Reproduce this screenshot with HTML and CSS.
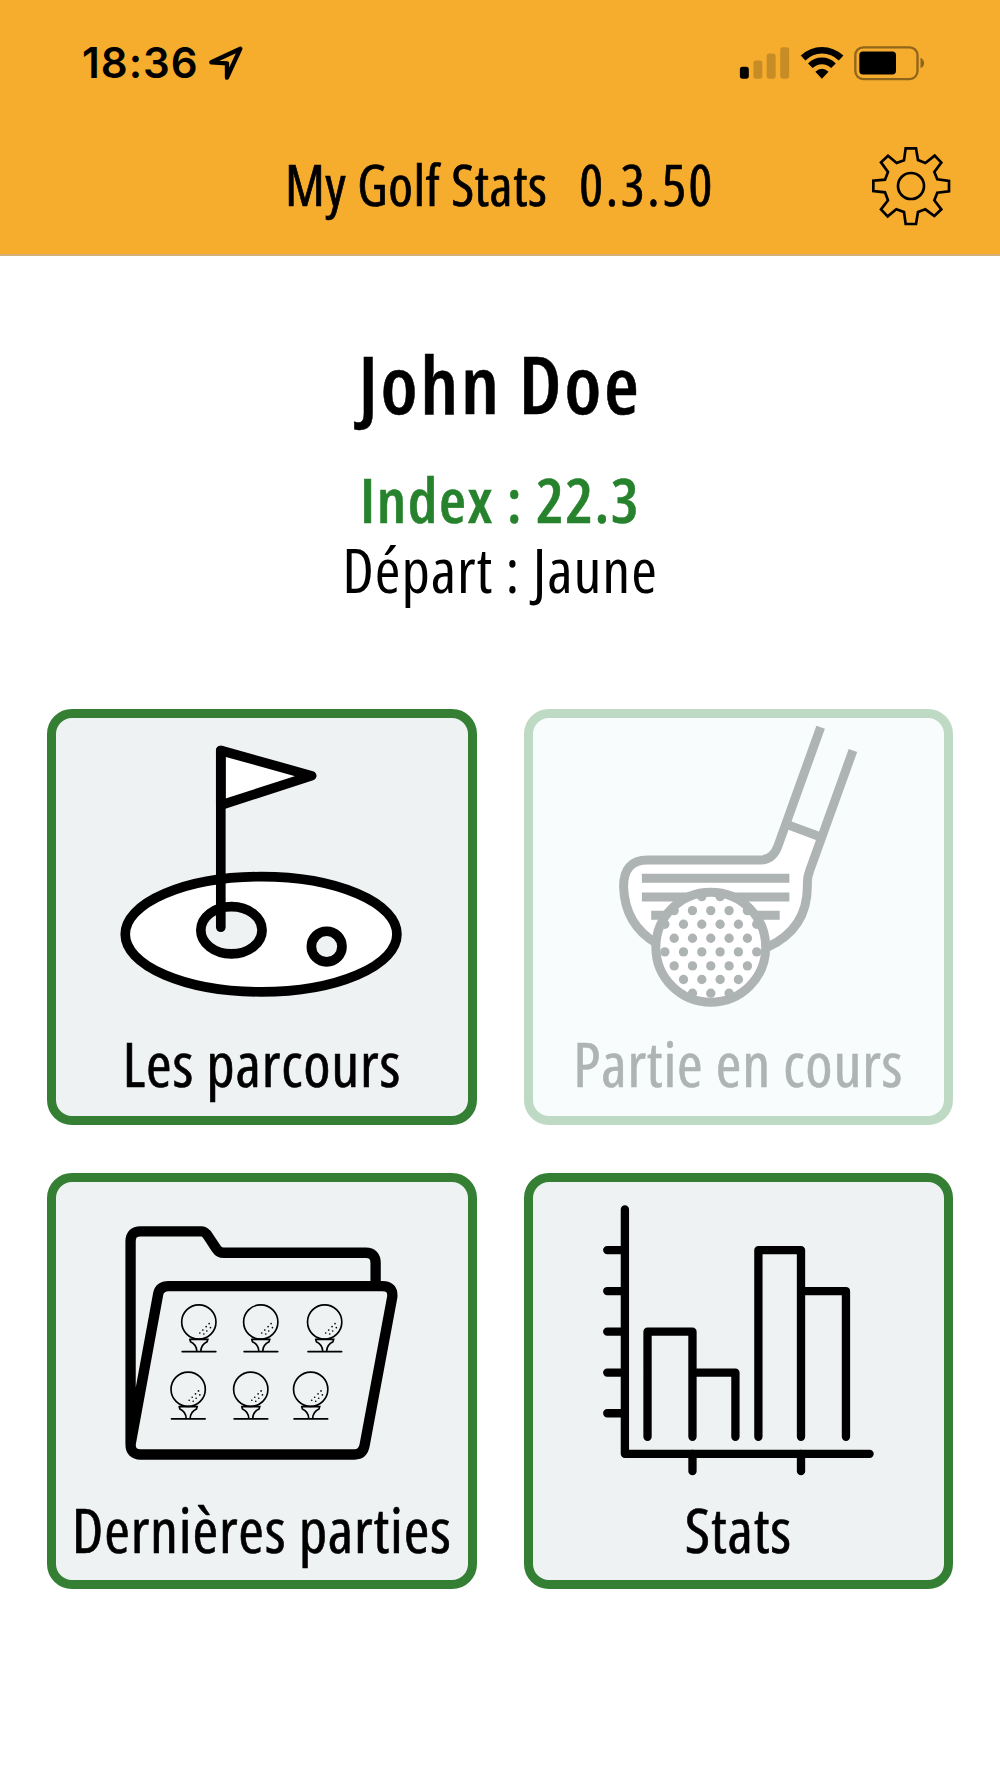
FILE: index.html
```
<!DOCTYPE html>
<html lang="fr">

<head>
    <meta charset="UTF-8">
    <meta name="viewport" content="width=device-width, initial-scale=1.0">
    <title>My Golf Stats</title>
    <link rel="stylesheet" href="styles.css">
</head>

<body>
    <header class="header">
        <div class="status-bar">
            <div class="clock">
                <span class="time">18:36</span>
                <svg class="location" viewBox="445 75 108 108">
                    <path d="M542 86 L455 127 L502 130 L502 173 Z" fill="none" stroke="#000" stroke-width="13" stroke-linejoin="round"/>
                </svg>
            </div>
            <svg class="indicators" viewBox="50 60 580 130">
                <!-- signal -->
                <rect x="60" y="138" width="27" height="36" rx="8"/>
                <g fill="#c78c25">
                    <rect x="101" y="119" width="27" height="55" rx="8"/>
                    <rect x="141" y="98" width="27" height="76" rx="8"/>
                    <rect x="182" y="79" width="27" height="95" rx="8"/>
                </g>
                <!-- wifi -->
                <path d="M244 104 Q272 78 308 78 Q344 78 373 104 L359 119 Q337 98 308 98 Q280 98 258 119 Z"/>
                <path d="M266 128 Q284 110 308 110 Q332 110 350 128 L336 142 Q324 130 308 130 Q292 130 280 142 Z"/>
                <path d="M288 153 Q298 144 308 144 Q318 144 328 153 L308 174 Z"/>
                <!-- battery -->
                <rect x="409" y="79" width="188" height="96" rx="24" fill="none" stroke="#8f651c" stroke-width="7"/>
                <rect x="421" y="92" width="111" height="69" rx="11"/>
                <path d="M606 111 Q617 117 617 127 Q617 137 606 142 Z" fill="#8f651c"/>
            </svg>
        </div>
        <div class="title-bar">
            <h1 class="title"><span>My Golf Stats</span><span class="version">0.3.50</span></h1>
            <svg class="gear" viewBox="62 48 240 240" fill="none" stroke="#000" stroke-width="8">
                <path d="M166 55 H197 L203 90 L225 99 L253 77 L273 98 L252 126 L261 148 L296 153 V184 L261 188 L252 211 L273 238 L252 258 L225 238 L203 246 L197 282 H166 L161 246 L138 238 L112 259 L92 238 L113 211 L104 187 L69 183 V152 L104 149 L113 126 L92 97 L113 77 L139 99 L161 91 Z"/>
                <circle cx="182" cy="168" r="39"/>
            </svg>
        </div>
    </header>

    <section class="profile">
        <h2 class="name">John Doe</h2>
        <p class="index">Index : 22.3</p>
        <p class="tee">Départ : Jaune</p>
    </section>

    <main class="menu">
        <div class="card">
            <svg class="picture" viewBox="48 54 1236 900" stroke="#000" stroke-width="29" stroke-linejoin="round" stroke-linecap="round">
                <ellipse cx="664" cy="703" rx="408" ry="173" fill="#fff"/>
                <ellipse cx="575" cy="691" rx="92" ry="71" fill="#eef2f3"/>
                <circle cx="861" cy="740" r="46" fill="#eef2f3"/>
                <path d="M543 151 L816 227 L543 315 Z" fill="#fff"/>
                <path d="M543 151 V682" fill="none"/>
            </svg>
            <span class="label">Les parcours</span>
        </div>

        <div class="card disabled">
            <svg class="picture" viewBox="54 54 1236 900" fill="none" stroke="#aeb3b4" stroke-width="27">
                <!-- club -->
                <path d="M816 372 L790 437 Q775 480 735 480 H398 Q326 480 326 560 Q330 675 425 730 H760 Q878 680 878 550 Q878 530 885 512 L920 410 Z" fill="#fff" stroke="none"/>
                <path d="M918 81 L790 437 Q775 480 735 480 H398 Q326 480 326 560 Q330 675 425 730"/>
                <path d="M1015 151 L885 512 Q878 530 878 550 V560 Q878 685 760 741"/>
                <path d="M816 373 L918 411 M381 535 H824 M381 591 H824 M409 646 H795"/>
                <!-- ball -->
                <circle cx="588" cy="742" r="165" fill="#fff"/>
                <g fill="#aeb3b4" stroke="none">
                    <circle cx="561" cy="590" r="14"/><circle cx="616" cy="590" r="14"/>
                    <circle cx="478" cy="632" r="14"/><circle cx="533" cy="632" r="14"/><circle cx="588" cy="632" r="14"/><circle cx="643" cy="632" r="14"/><circle cx="698" cy="632" r="14"/>
                    <circle cx="450" cy="673" r="14"/><circle cx="506" cy="673" r="14"/><circle cx="561" cy="673" r="14"/><circle cx="616" cy="673" r="14"/><circle cx="671" cy="673" r="14"/><circle cx="726" cy="673" r="14"/>
                    <circle cx="478" cy="715" r="14"/><circle cx="533" cy="715" r="14"/><circle cx="588" cy="715" r="14"/><circle cx="643" cy="715" r="14"/><circle cx="698" cy="715" r="14"/>
                    <circle cx="450" cy="756" r="14"/><circle cx="506" cy="756" r="14"/><circle cx="561" cy="756" r="14"/><circle cx="616" cy="756" r="14"/><circle cx="671" cy="756" r="14"/><circle cx="726" cy="756" r="14"/>
                    <circle cx="478" cy="798" r="14"/><circle cx="533" cy="798" r="14"/><circle cx="588" cy="798" r="14"/><circle cx="643" cy="798" r="14"/><circle cx="698" cy="798" r="14"/>
                    <circle cx="506" cy="839" r="14"/><circle cx="561" cy="839" r="14"/><circle cx="616" cy="839" r="14"/><circle cx="671" cy="839" r="14"/>
                    <circle cx="533" cy="880" r="14"/><circle cx="588" cy="880" r="14"/><circle cx="643" cy="880" r="14"/>
                </g>
            </svg>
            <span class="label">Partie en cours</span>
        </div>

        <div class="card">
            <svg class="picture tall" viewBox="48 65 1236 906" fill="none" stroke="#000" stroke-width="31">
                <defs>
                    <g id="ball" stroke-width="5" stroke-linecap="round">
                        <circle r="51.500"/>
                        <path d="M-27 52 H27 L25 59 Q7 67 6 87 M-27 52 L-25 59 Q-7 67 -6 87"/>
                        <path d="M-50 89 H51"/>
                        <path d="M3 33 h.1 M15 36 h.1 M12 24 h.1 M24 27 h.1 M22 14 h.1 M35 17 h.1 M31 5 h.1"/>
                    </g>
                </defs>
                <path d="M1008 376 V308 Q1008 277 978 277 H552 Q538 277 530 265 L506 229 Q496 213 486 213 H302 Q272 213 272 243 V852 Q272 883 302 883 H945 Q970 883 975 855 L1058 410 Q1061 377 1028 377 H386 Q360 377 355 400 L272 852"/>
                <use href="#ball" x="477" y="485"/>
                <use href="#ball" x="663" y="485"/>
                <use href="#ball" x="855" y="485"/>
                <use href="#ball" x="445" y="687"/>
                <use href="#ball" x="633" y="687"/>
                <use href="#ball" x="813" y="687"/>
            </svg>
            <span class="label">Dernières parties</span>
        </div>

        <div class="card">
            <svg class="picture tall" viewBox="54 65 1236 906" fill="none" stroke="#000" stroke-width="25" stroke-linejoin="round" stroke-linecap="round">
                <path d="M330 147 V881 H1065"/>
                <path d="M277 269 H330 M277 392 H330 M277 514 H330 M277 637 H330 M277 759 H330"/>
                <path d="M533 881 V933 M859 881 V933"/>
                <path d="M398 830 V514 H533 V830 M533 637 H662 V830"/>
                <path d="M731 830 V269 H859 V830 M859 392 H994 V830"/>
            </svg>
            <span class="label">Stats</span>
        </div>
    </main>
</body>

</html>
```
FILE: styles.css
```
body {
    margin: 0;
    background-color: #fff;
    color: #000;
    font-family: "Open Sans", sans-serif;
    font-stretch: 75%;
}

h1,
h2,
p {
    margin: 0;
}

svg {
    display: block;
}

.header {
    box-sizing: border-box;
    height: 256px;
    background-color: #f6ac2d;
    border-bottom: 2px solid #d3b079;
}

.status-bar {
    display: flex;
    justify-content: space-between;
    align-items: center;
    height: 125px;
    padding: 0 71px 0 82px;
}

.clock {
    display: flex;
    align-items: center;
    gap: 9px;
}

.time {
    font-family: Inter, sans-serif;
    font-stretch: 100%;
    font-size: 42px;
    font-weight: 600;
    letter-spacing: 1px;
}

.location {
    width: 36px;
    height: 36px;
}

.indicators {
    width: 193px;
    height: 43px;
}

.title-bar {
    display: grid;
    grid-template-columns: 1fr auto 1fr;
    align-items: center;
    height: 117px;
    padding: 0 49px;
}

.title {
    grid-column: 2;
    display: flex;
    gap: 32px;
    font-size: 56px;
    font-weight: 400;
    letter-spacing: 0.6px;
    -webkit-text-stroke: 0.7px;
}

.version {
    letter-spacing: 2.6px;
}

.gear {
    width: 80px;
    height: 80px;
    margin-top: 5px;
    justify-self: end;
}

.profile {
    padding-top: 77px;
    text-align: center;
    font-size: 62px;
    line-height: 70px;
}

.name {
    font-size: 80px;
    font-weight: 600;
    letter-spacing: 2.6px;
    line-height: 100px;
    margin-bottom: 31px;
    -webkit-text-stroke: 0.5px;
}

.index {
    color: #27822d;
    font-weight: 600;
    letter-spacing: 1.5px;
    -webkit-text-stroke: 0.5px;
}

.tee {
    font-weight: 400;
    letter-spacing: 0.9px;
}

.menu {
    display: grid;
    grid-template-columns: 1fr 1fr;
    gap: 48px 47px;
    padding: 0 47px;
    margin-top: 105px;
}

.card {
    box-sizing: border-box;
    height: 416px;
    border: 9px solid #347f33;
    border-radius: 25px;
    background-color: #eef2f3;
    text-align: center;
}

.disabled {
    border-color: #bfdac4;
    background-color: #f8fcfd;
    color: #aeb3b4;
}

.picture {
    width: 100%;
    height: 300px;
}

.tall {
    height: 302px;
}

.label {
    font-size: 62px;
    font-weight: 400;
    letter-spacing: 0.8px;
    line-height: 91px;
    white-space: nowrap;
    -webkit-text-stroke: 0.6px;
}
```
